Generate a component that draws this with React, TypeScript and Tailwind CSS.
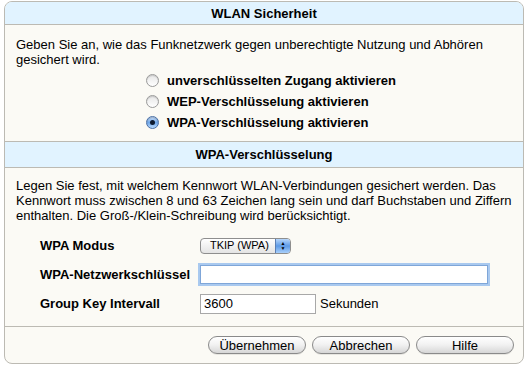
const Radio = ({ checked, label }: { checked?: boolean; label: string }) => (
  <div className="flex h-[21px] items-center">
    {checked ? (
      <span className="flex h-[13px] w-[13px] items-center justify-center rounded-full border border-[#4a6fa5] bg-gradient-to-b from-[#cfe3fb] via-[#6fa6e8] to-[#b9dafd] shadow-[inset_0_1px_1px_rgba(0,0,0,0.2)]">
        <span className="h-[5px] w-[5px] rounded-full bg-[#0d1a2e]" />
      </span>
    ) : (
      <span className="h-[13px] w-[13px] rounded-full border border-[#9a9a9a] bg-gradient-to-b from-[#e6e6e6] to-white shadow-[inset_0_1px_1px_rgba(0,0,0,0.15)]" />
    )}
    <span className="ml-[8px] font-bold">{label}</span>
  </div>
);

const Button = ({ label }: { label: string }) => (
  <button className="h-[18px] w-[98px] rounded-full border border-[#8a8a8a] bg-gradient-to-b from-white via-[#f1f1f1] to-[#d6d6d6] text-[13px] leading-none text-black shadow-[0_1px_0_rgba(0,0,0,0.08)]">
    {label}
  </button>
);

export default function App() {
  return (
    <div
      className="h-[366px] w-[528px] bg-white pt-[1px] pl-[4px] text-[13px] leading-[15px] text-black"
      style={{ fontFamily: '"Liberation Sans", Arial, sans-serif' }}
    >
      <div className="w-[520px] rounded-[8px] border border-[#bcbab3] bg-[#fbfaf5]">
        <div className="flex h-[23px] items-center justify-center rounded-t-[7px] border-b border-[#bcbab3] bg-[#e1f3ff] font-bold">
          WLAN Sicherheit
        </div>
        <div className="pt-[12px] pr-[10px] pb-[8px] pl-[11px]">
          <p>Geben Sie an, wie das Funknetzwerk gegen unberechtigte Nutzung und Abhören gesichert wird.</p>
          <div className="mt-[3px] pl-[130px]">
            <Radio label="unverschlüsselten Zugang aktivieren" />
            <Radio label="WEP-Verschlüsselung aktivieren" />
            <Radio checked label="WPA-Verschlüsselung aktivieren" />
          </div>
        </div>
        <div className="flex h-[27px] items-center justify-center border-y border-[#bcbab3] bg-[#e1f3ff] font-bold">
          WPA-Verschlüsselung
        </div>
        <div className="border-b border-[#bcbab3] pt-[10px] pr-[10px] pb-[8px] pl-[11px]">
          <p>
            Legen Sie fest, mit welchem Kennwort WLAN-Verbindungen gesichert werden. Das Kennwort muss zwischen 8
            und 63 Zeichen lang sein und darf Buchstaben und Ziffern enthalten. Die Groß-/Klein-Schreibung wird
            berücksichtigt.
          </p>
          <div className="mt-[8px] grid grid-cols-[160px_1fr] pl-[24px]">
            <div className="flex h-[29px] items-center font-bold">WPA Modus</div>
            <div className="flex h-[29px] items-center">
              <div className="flex h-[16px] w-[91px] items-center overflow-hidden rounded-[4px] border border-[#8e8e8e] bg-gradient-to-b from-white to-[#e4e4e4] text-[11px]">
                <span className="flex-1 whitespace-nowrap pl-[9px] leading-none">TKIP (WPA)</span>
                <span className="flex h-full w-[15px] flex-col items-center justify-center border-l border-[#5b7fb4] bg-gradient-to-b from-[#b7d6fb] via-[#5d9ae6] to-[#a9cffa] text-[5px] leading-[5px] text-black">
                  <span>▲</span>
                  <span>▼</span>
                </span>
              </div>
            </div>
            <div className="flex h-[29px] items-center font-bold">WPA-Netzwerkschlüssel</div>
            <div className="flex h-[29px] items-center">
              <input
                className="h-[19px] w-[288px] border border-[#7fa6d8] bg-white shadow-[0_0_0_2px_#a9c9ef] outline-none"
                defaultValue=""
              />
            </div>
            <div className="flex h-[29px] items-center font-bold">Group Key Intervall</div>
            <div className="flex h-[29px] items-center">
              <input
                className="h-[20px] w-[116px] border border-[#a8a8a8] bg-white px-[3px] text-[13px] outline-none"
                defaultValue="3600"
              />
              <span className="ml-[4px]">Sekunden</span>
            </div>
          </div>
        </div>
        <div className="flex h-[36px] items-center justify-end gap-[6px] pr-[9px]">
          <Button label="Übernehmen" />
          <Button label="Abbrechen" />
          <Button label="Hilfe" />
        </div>
      </div>
    </div>
  );
}
